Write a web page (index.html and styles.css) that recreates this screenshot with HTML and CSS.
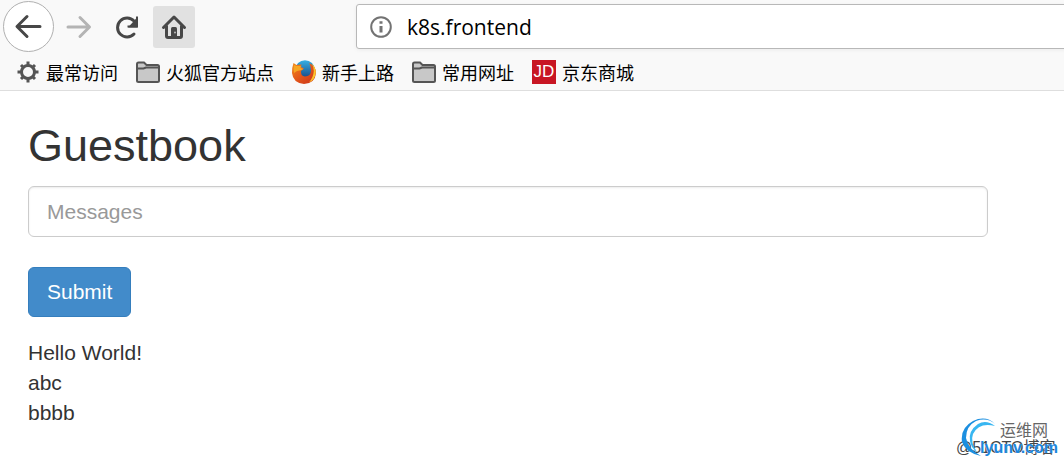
FILE: index.html
```html
<!DOCTYPE html>
<html lang="zh-CN">

<head>
    <meta charset="UTF-8">
    <meta name="viewport" content="width=device-width, initial-scale=1.0">
    <title>Guestbook</title>
    <link rel="stylesheet" href="styles.css">
</head>

<body>

    <header class="browser">
        <div class="nav-bar">
            <button type="button" class="nav-btn back" aria-label="Back">
                <svg width="49" height="49" viewBox="0 0 49 49">
                    <path d="M36 24.500H14M23 14.500L13 24.500L23 34.500" />
                </svg>
            </button>
            <button type="button" class="nav-btn forward" aria-label="Forward" disabled>
                <svg width="42" height="42" viewBox="0 0 42 42">
                    <path d="M11 21H32M23 11.500L32.500 21L23 30.500" />
                </svg>
            </button>
            <button type="button" class="nav-btn reload" aria-label="Reload">
                <svg width="42" height="42" viewBox="0 0 42 42">
                    <path d="M29 28A9.500 9.500 0 1 1 29 15" />
                    <path class="solid" d="M31 10.500H33V21.500H22.500V19.500H27L31 15.500Z" />
                    <path class="solid" d="M32.500 11V21.500H23Z" />
                </svg>
            </button>
            <button type="button" class="nav-btn home" aria-label="Home">
                <svg width="42" height="42" viewBox="0 0 42 42">
                    <path d="M10.500 21.500L21 11L31.500 21.500M13.500 20V30Q13.500 31.500 15 31.500H27Q28.500 31.500 28.500 30V20" />
                    <path class="solid" d="M18 31V22.500Q18 21 19.500 21H22.500Q24 21 24 22.500V31Z" />
                    <circle class="knob" cx="22" cy="26.500" r="1" />
                </svg>
            </button>
            <div class="url-bar">
                <svg width="22" height="22" viewBox="0 0 22 22">
                    <circle cx="11" cy="11" r="9.800" />
                    <path d="M11 10V16.500M11 5.200V7.700" />
                </svg>
                <input type="text" value="k8s.frontend" aria-label="Address">
            </div>
        </div>

        <nav class="bookmarks">
            <a href="#">
                <svg width="22" height="22" viewBox="0 0 22 22" class="gear">
                    <circle cx="11" cy="11" r="6.500" />
                    <path d="M11 0.500V5M11 17V21.500M0.500 11H5M17 11H21.500M4 4L6.500 6.500M15.500 15.500L18 18M18 4L15.500 6.500M6.500 15.500L4 18" />
                </svg>
                最常访问
            </a>
            <a href="#">
                <svg width="24" height="22" viewBox="0 0 24 22" class="folder">
                    <path d="M1 19.500V3Q1 1.500 2.500 1.500H8L10.500 4H21.500Q23 4 23 5.500V19.500Q23 21 21.500 21H2.500Q1 21 1 19.500Z" />
                    <path d="M1 7.500H7.500L10 6.500H23" />
                </svg>
                火狐官方站点
            </a>
            <a href="#">
                <svg width="24" height="24" viewBox="0 0 24 24">
                    <defs>
                        <linearGradient id="fox" x1="0" y1="0" x2="1" y2="1">
                            <stop offset="0" stop-color="#f08a1c" />
                            <stop offset="0.500" stop-color="#e2561a" />
                            <stop offset="1" stop-color="#c9301a" />
                        </linearGradient>
                        <linearGradient id="globe" x1="0" y1="0" x2="0" y2="1">
                            <stop offset="0" stop-color="#35b0e4" />
                            <stop offset="1" stop-color="#163f7c" />
                        </linearGradient>
                    </defs>
                    <circle cx="13" cy="10" r="9.800" fill="url(#globe)" />
                    <path fill="url(#fox)" d="M1.500 3L4.500 5L9.500 4.500L9 7L12 8.500L9 11Q8.500 16 13 16.500Q19 16.500 19 10Q19 6 17 3Q24 6 24 13Q23 23.500 12 24Q1 23 0 13Q0 7 1.500 3Z" />
                    <path fill="#fbc52d" d="M20 3.500Q24 8 23.800 13Q23 20 17 22.500Q21.500 17 21.800 11Q21.500 6.500 20 3.500Z" />
                    <path fill="#f6a623" d="M2 5L4.500 6L9 6L8.500 8L11.500 9L8 10.500Q5 10 2 13Q1 9 2 5Z" />
                </svg>
                新手上路
            </a>
            <a href="#">
                <svg width="24" height="22" viewBox="0 0 24 22" class="folder">
                    <path d="M1 19.500V3Q1 1.500 2.500 1.500H8L10.500 4H21.500Q23 4 23 5.500V19.500Q23 21 21.500 21H2.500Q1 21 1 19.500Z" />
                    <path d="M1 7.500H7.500L10 6.500H23" />
                </svg>
                常用网址
            </a>
            <a href="#">
                <span class="jd">JD</span>
                京东商城
            </a>
        </nav>
    </header>

    <main class="container">
        <h2>Guestbook</h2>
        <form>
            <input type="text" class="form-control" placeholder="Messages" aria-label="Messages">
            <button type="button" class="btn">Submit</button>
        </form>
        <div class="messages">
            <div>Hello World!</div>
            <div>abc</div>
            <div>bbbb</div>
        </div>
    </main>

    <!-- Site watermark, sits over the corner of the page -->
    <div class="watermark">
        <span class="blog">@51CTO博客</span>
        <svg width="38" height="42" viewBox="0 0 38 42">
            <path fill="#1b8fe0" d="M35 8Q26 -1 13 5Q0 12 2 26Q6 37 21 40Q8 33 6 22Q6 10 16 5Q27 1 35 8Z" />
            <path fill="#38b6f1" d="M35 10Q26 3 18 8Q8 15 10 25Q11 32 17 36Q10 26 13 18Q19 6 35 10Z" />
        </svg>
        <span class="site-name">运维网</span>
        <span class="site-url">lyunv.com</span>
    </div>

</body>

</html>
```

FILE: styles.css
```css
* {
    box-sizing: border-box;
}

body {
    margin: 0;
    min-height: 100vh;
    position: relative;
    overflow-x: hidden;
    background-color: #fff;
    color: #333;
    font-family: "Liberation Sans", Arial, sans-serif;
    font-size: 21px;
    line-height: 30px;
}

svg {
    display: block;
    flex: none;
}

/* Browser toolbar */
.browser {
    background-color: #f9f9f9;
    border-bottom: 1px solid #dedede;
}

.nav-bar {
    display: flex;
    align-items: center;
    height: 53px;
    padding-left: 3px;
}

.nav-btn {
    flex: none;
    width: 42px;
    height: 42px;
    margin-right: 6px;
    padding: 0;
    border: none;
    border-radius: 3px;
    background: none;
}

.nav-btn path {
    fill: none;
    stroke: #474747;
    stroke-width: 3;
    stroke-linecap: round;
    stroke-linejoin: round;
}

.nav-btn .solid {
    fill: #474747;
    stroke: none;
}

.nav-btn .knob {
    fill: #bbb;
}

.nav-btn.back {
    width: 51px;
    height: 51px;
    margin-right: 3px;
    border: 1px solid #b0b0b0;
    border-radius: 50%;
    background-color: #fff;
}

.nav-btn.forward path {
    stroke: #b4b4b4;
}

.nav-btn.home {
    margin-right: 161px;
    background-color: #e1e1e1;
}

.url-bar {
    flex: 1;
    display: flex;
    align-items: center;
    gap: 15px;
    height: 45px;
    margin-right: -4px;
    padding-left: 13px;
    border: 1px solid #b8b8b8;
    border-radius: 3px;
    background-color: #fff;
    box-shadow: 0 1px 4px rgba(0, 0, 0, 0.06);
}

.url-bar svg {
    fill: none;
    stroke: #737373;
    stroke-width: 2;
}

.url-bar svg path {
    stroke-width: 3;
}

.url-bar input {
    flex: 1;
    min-width: 0;
    padding: 0;
    border: none;
    outline: none;
    background: none;
    color: #000;
    font-family: "Open Sans", "Noto Sans", sans-serif;
    font-size: 21px;
}

.bookmarks {
    display: flex;
    gap: 18px;
    height: 37px;
    padding-left: 17px;
}

.bookmarks a {
    display: flex;
    align-items: center;
    gap: 6px;
    color: #000;
    font-family: "Noto Sans CJK SC", sans-serif;
    font-size: 18px;
    text-decoration: none;
    white-space: nowrap;
}

.gear {
    margin-right: 1px;
    fill: none;
    stroke: #555;
    stroke-width: 3;
}

.folder {
    fill: #c8c8c8;
    stroke: #555;
    stroke-width: 2;
}

.jd {
    width: 24px;
    height: 24px;
    background-color: #c81623;
    color: #fff;
    font-family: "Liberation Sans", Arial, sans-serif;
    font-size: 17px;
    line-height: 24px;
    text-align: center;
}

/* Page */
.container {
    margin: 0 76px 0 28px;
    padding-top: 30px;
}

h2 {
    margin: 0 0 15px;
    font-size: 45px;
    font-weight: 500;
    line-height: 50px;
}

.form-control {
    display: block;
    width: 100%;
    height: 51px;
    margin-bottom: 30px;
    padding: 9px 18px;
    border: 1px solid #ccc;
    border-radius: 6px;
    box-shadow: inset 0 1px 2px rgba(0, 0, 0, 0.08);
    color: #555;
    font-family: inherit;
    font-size: 21px;
}

.form-control::placeholder {
    color: #999;
}

.btn {
    display: block;
    height: 50px;
    padding: 0 18px;
    border: 1px solid #357ebd;
    border-radius: 6px;
    background-color: #428bca;
    color: #fff;
    font-family: inherit;
    font-size: 21px;
    cursor: pointer;
}

.btn:hover {
    background-color: #3276b1;
}

.messages {
    margin-top: 21px;
}

/* Watermark */
.watermark {
    position: absolute;
    right: 6px;
    bottom: 4px;
    width: 102px;
    height: 44px;
    line-height: 20px;
    white-space: nowrap;
}

.watermark svg,
.watermark span {
    position: absolute;
}

.watermark svg {
    left: 4px;
    top: 0;
}

.blog {
    left: 0;
    bottom: 2px;
    color: #444;
    font-family: "Liberation Sans", "Noto Sans CJK SC", sans-serif;
    font-size: 16px;
}

.site-name {
    right: 10px;
    top: 3px;
    color: #666;
    font-family: "Noto Sans CJK SC", sans-serif;
    font-size: 16px;
}

.site-url {
    right: 0;
    bottom: 2px;
    color: #1c86dc;
    font-size: 16px;
    font-weight: bold;
    text-shadow: 0 0 1px #fff;
}
```
